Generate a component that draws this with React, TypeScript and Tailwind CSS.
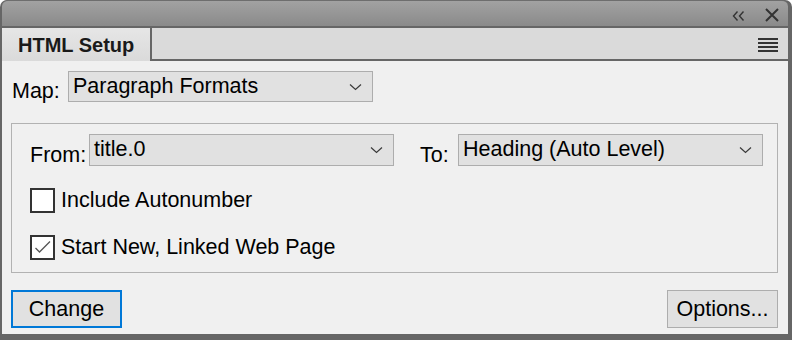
import * as React from 'react';

const font = { fontFamily: '"Liberation Sans", Arial, sans-serif' };

function Chevron() {
  return (
    <svg width="13" height="8" viewBox="0 0 13 8" className="shrink-0">
      <path d="M1 1.5 L6.5 6.5 L12 1.5" fill="none" stroke="#3a3a3a" strokeWidth="1.2" />
    </svg>
  );
}

function Select({ value, className }: { value: string; className?: string }) {
  return (
    <div
      className={
        'flex shrink-0 items-center justify-between border border-[#adadad] bg-[#e1e1e1] pl-[4px] pr-[10px] text-[21.5px] leading-none text-black ' +
        (className ?? '')
      }
    >
      <span>{value}</span>
      <Chevron />
    </div>
  );
}

function Checkbox({ checked, label }: { checked?: boolean; label: string }) {
  return (
    <div className="flex items-center gap-[6px]">
      <div className="flex h-[25px] w-[25px] items-center justify-center border-2 border-[#333333] bg-white">
        {checked && (
          <svg width="19" height="15" viewBox="0 0 19 15">
            <path d="M2.5 8 L6.5 12 L17 1.5" fill="none" stroke="#555555" strokeWidth="1.3" />
          </svg>
        )}
      </div>
      <span className="text-[21.5px] leading-none text-black">{label}</span>
    </div>
  );
}

export default function App() {
  return (
    <div className="h-[340px] w-[792px] bg-white" style={font}>
      <div className="flex h-full w-full flex-col rounded-t-[7px] bg-[#666666] pb-[6px] pl-[2px] pr-[4px]">
        {/* title bar */}
        <div className="flex h-[26px] items-center justify-end gap-[20px] rounded-t-[6px] border-t border-[#6e6e6e] bg-gradient-to-b from-[#a2a2a2] to-[#8a8a8a] pr-[9px]">
          <svg width="13" height="10" viewBox="0 0 13 10" className="mt-[5px]">
            <path d="M5.5 0.5 L1.5 5 L5.5 9.5 M11.5 0.5 L7.5 5 L11.5 9.5" fill="none" stroke="#333333" strokeWidth="1.4" />
          </svg>
          <svg width="14" height="14" viewBox="0 0 14 14" className="mt-[3px]">
            <path d="M1 1 L13 13 M13 1 L1 13" fill="none" stroke="#333333" strokeWidth="2" />
          </svg>
        </div>

        {/* tab strip */}
        <div className="mt-[2px] flex h-[33px]">
          <div className="flex w-[148px] items-center bg-gradient-to-b from-[#e6e6e6] to-[#dadada] pl-[16px]">
            <span className="text-[20px] font-bold leading-none text-[#1a1a1a]">HTML Setup</span>
          </div>
          <div className="w-[2px] bg-[#666666]" />
          <div className="flex flex-1 items-start justify-end border-b-2 border-[#666666] bg-[#dadada] pr-[10px] pt-[10px]">
            <div className="flex w-[20px] flex-col gap-[2px]">
              <div className="h-[2px] bg-[#333333]" />
              <div className="h-[2px] bg-[#333333]" />
              <div className="h-[2px] bg-[#333333]" />
              <div className="h-[2px] bg-[#333333]" />
            </div>
          </div>
        </div>

        {/* content */}
        <div className="flex flex-1 flex-col bg-[#f0f0f0] pl-[9px] pr-[10px] pt-[10px]">
          <div className="flex items-end">
            <span className="w-[57px] pl-[1px] text-[21.5px] leading-none text-black">Map:</span>
            <Select value="Paragraph Formats" className="h-[31px] w-[305px]" />
          </div>

          <div className="mt-[21px] flex h-[150px] flex-col border border-[#b2b2b2] pl-[18px] pr-[13px] pt-[10px]">
            <div className="flex items-end">
              <span className="w-[59px] text-[21.5px] leading-none text-black">From:</span>
              <Select value="title.0" className="h-[32px] w-[305px]" />
              <span className="ml-[26px] w-[38px] text-[21.5px] leading-none text-black">To:</span>
              <Select value="Heading (Auto Level)" className="h-[32px] w-[305px]" />
            </div>
            <div className="mt-[22px] flex flex-col gap-[22px]">
              <Checkbox label="Include Autonumber" />
              <Checkbox checked label="Start New, Linked Web Page" />
            </div>
          </div>

          <div className="mt-[17px] flex justify-between">
            <button className="flex h-[38px] w-[111px] items-center justify-center border-2 border-[#0078d7] bg-[#e1e1e1] text-[21.5px] leading-none text-black">
              <span className="mt-[1px]">Change</span>
            </button>
            <button className="flex h-[38px] w-[111px] items-center justify-center border border-[#adadad] bg-[#e1e1e1] text-[21.5px] leading-none text-black">
              <span className="mt-[1px]">Options...</span>
            </button>
          </div>
        </div>
      </div>
    </div>
  );
}
